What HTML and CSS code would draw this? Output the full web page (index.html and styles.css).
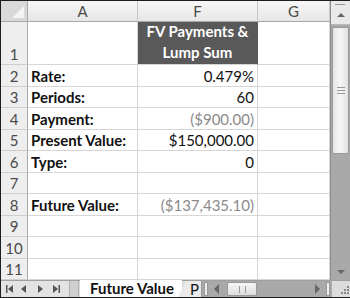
FILE: index.html
```html
<!DOCTYPE html>
<html lang="en">
<head>
    <meta charset="UTF-8">
    <title>Future Value</title>
    <link rel="stylesheet" href="styles.css">
</head>
<body>
    <div class="frame">
        <div class="main">
            <div class="sheet">
                <div class="corner"></div>
                <div class="ch">A</div>
                <div class="ch">F</div>
                <div class="ch">G</div>

                <div class="rh">1</div>
                <div class="cell"></div>
                <div class="cell title">FV Payments &amp;<br>Lump Sum</div>
                <div class="cell"></div>

                <div class="rh">2</div>
                <div class="cell label">Rate:</div>
                <div class="cell num">0.479%</div>
                <div class="cell"></div>

                <div class="rh">3</div>
                <div class="cell label">Periods:</div>
                <div class="cell num">60</div>
                <div class="cell"></div>

                <div class="rh">4</div>
                <div class="cell label">Payment:</div>
                <div class="cell num neg">($900.00)</div>
                <div class="cell"></div>

                <div class="rh">5</div>
                <div class="cell label">Present Value:</div>
                <div class="cell num">$150,000.00</div>
                <div class="cell"></div>

                <div class="rh">6</div>
                <div class="cell label">Type:</div>
                <div class="cell num">0</div>
                <div class="cell"></div>

                <div class="rh">7</div>
                <div class="cell"></div>
                <div class="cell"></div>
                <div class="cell"></div>

                <div class="rh">8</div>
                <div class="cell label">Future Value:</div>
                <div class="cell num neg">($137,435.10)</div>
                <div class="cell"></div>

                <div class="rh">9</div>
                <div class="cell"></div>
                <div class="cell"></div>
                <div class="cell"></div>

                <div class="rh">10</div>
                <div class="cell"></div>
                <div class="cell"></div>
                <div class="cell"></div>

                <div class="rh">11</div>
                <div class="cell"></div>
                <div class="cell"></div>
                <div class="cell"></div>
            </div>
            <div class="vscroll">
                <div class="vbtn up"><span class="tri-up"></span></div>
                <div class="vthumb"><span class="grip"></span></div>
                <div class="vtrack"></div>
                <div class="vbtn down"><span class="tri-down"></span></div>
            </div>
        </div>
        <div class="tabbar">
            <div class="nav">
                <svg width="66" height="12" viewBox="0 0 66 12">
                    <rect x="5" y="2" width="1.5" height="8" fill="#555"/>
                    <path d="M12 2 L7 6 L12 10 Z" fill="#555"/>
                    <path d="M25 2 L20 6 L25 10 Z" fill="#555"/>
                    <path d="M37 2 L42 6 L37 10 Z" fill="#555"/>
                    <path d="M52 2 L57 6 L52 10 Z" fill="#555"/>
                    <rect x="57.5" y="2" width="1.5" height="8" fill="#555"/>
                </svg>
            </div>
            <div class="splitter"></div>
            <div class="tab active">Future Value</div>
            <div class="tab next">P</div>
            <div class="hscroll">
                <span class="hmark"></span>
                <span class="tri-left"></span>
                <div class="hthumb"><span class="hgrip"></span></div>
                <div class="htrack"></div>
                <span class="tri-right"></span>
                <span class="hmark"></span>
            </div>
            <div class="resize">
                <svg width="14" height="14" viewBox="0 0 14 14">
                    <rect x="11" y="3" width="2" height="2" fill="#888"/>
                    <rect x="8" y="6" width="2" height="2" fill="#888"/>
                    <rect x="11" y="6" width="2" height="2" fill="#888"/>
                    <rect x="5" y="9" width="2" height="2" fill="#888"/>
                    <rect x="8" y="9" width="2" height="2" fill="#888"/>
                    <rect x="11" y="9" width="2" height="2" fill="#888"/>
                </svg>
            </div>
        </div>
    </div>
</body>
</html>
```
FILE: styles.css
```css
body {
    margin: 0;
    font-family: Lato, "Open Sans", Arial, sans-serif;
    background: #fff;
}
.frame {
    width: 350px;
    height: 298px;
    box-sizing: border-box;
    border-top: 1px solid #1e1e1e;
    border-left: 1px solid #1e1e1e;
    border-bottom: 1px solid #1e1e1e;
    display: flex;
    flex-direction: column;
    overflow: hidden;
}
.main {
    display: flex;
    height: 279px;
}
.sheet {
    display: grid;
    grid-template-columns: 27px 110px 120px 72px;
    grid-template-rows: 21px 43px repeat(10, 21.5px);
    width: 329px;
}
.corner {
    background: #d9d9d9;
    border-right: 1px solid #a8a8a8;
    border-bottom: 1px solid #a8a8a8;
    box-sizing: border-box;
    position: relative;
}
.corner::after {
    content: "";
    position: absolute;
    right: 3px;
    bottom: 3px;
    border-left: 12px solid transparent;
    border-bottom: 12px solid #f4f4f4;
}
.ch {
    background: linear-gradient(#f7f7f7, #e6e6e6);
    border-right: 1px solid #c8c8c8;
    border-bottom: 1px solid #a8a8a8;
    box-sizing: border-box;
    color: #4a4a4a;
    font-size: 15px;
    display: flex;
    align-items: center;
    justify-content: center;
}
.rh {
    background: #eeeeee;
    border-right: 1px solid #a8a8a8;
    border-bottom: 1px solid #cfcfcf;
    box-sizing: border-box;
    color: #4a4a4a;
    font-size: 15px;
    display: flex;
    align-items: flex-end;
    justify-content: center;
    padding-bottom: 1px;
    line-height: 18px;
}
.cell {
    border-right: 1px solid #d6d6d6;
    border-bottom: 1px solid #d6d6d6;
    box-sizing: border-box;
    font-size: 15px;
    line-height: 18px;
    display: flex;
    align-items: flex-end;
    padding: 0 3px 1px 3px;
    color: #111;
}
.label {
    font-weight: bold;
}
.num {
    justify-content: flex-end;
}
.neg {
    color: #8a8a8a;
}
.title {
    background: #595959;
    color: #fff;
    font-weight: bold;
    text-align: center;
    justify-content: center;
    line-height: 21px;
    padding-bottom: 1px;
    border-right-color: #595959;
}
.vscroll {
    width: 20px;
    background: #a9a9a9;
    border-left: 1px solid #8c8c8c;
    box-sizing: border-box;
    display: flex;
    flex-direction: column;
}
.vbtn {
    background: #e9e9e9;
    display: flex;
    justify-content: center;
    align-items: center;
}
.vbtn.up {
    height: 24px;
    border-bottom: 1px solid #bbb;
    box-sizing: border-box;
    position: relative;
}
.vbtn.up::before {
    content: "";
    position: absolute;
    top: 3px;
    left: 4px;
    width: 10px;
    height: 1px;
    background: #999;
}
.vbtn.down {
    height: 16px;
    background: #a9a9a9;
}
.tri-up {
    border-left: 4px solid transparent;
    border-right: 4px solid transparent;
    border-bottom: 4px solid #666;
    margin-top: 4px;
}
.tri-down {
    border-left: 4px solid transparent;
    border-right: 4px solid transparent;
    border-top: 4px solid #666;
}
.vthumb {
    height: 125px;
    margin: 2px 1px 0 1px;
    background: linear-gradient(90deg, #e6e6e6, #f6f6f6 50%, #e2e2e2);
    border: 1px solid #9a9a9a;
    border-radius: 2px;
    display: flex;
    align-items: center;
    justify-content: center;
}
.grip {
    width: 8px;
    height: 5px;
    border-top: 1px solid #999;
    border-bottom: 1px solid #999;
    position: relative;
}
.grip::after {
    content: "";
    position: absolute;
    left: 0;
    right: 0;
    top: 2px;
    height: 1px;
    background: #999;
}
.vtrack {
    flex: 1;
}
.tabbar {
    height: 18px;
    background: #dcdcdc;
    border-top: 1px solid #a0a0a0;
    box-sizing: border-box;
    display: flex;
    align-items: stretch;
}
.nav {
    width: 68px;
    display: flex;
    align-items: center;
    border-right: 1px solid #b0b0b0;
    background: #e3e3e3;
}
.splitter {
    width: 8px;
    background: #d0d0d0;
    border-right: 1px solid #b0b0b0;
}
.tab {
    font-size: 15px;
    font-weight: bold;
    line-height: 16px;
    color: #111;
}
.tab.active {
    background: #fff;
    padding: 0 8px 0 10px;
    margin-left: 1px;
    margin-top: -1px;
    position: relative;
    clip-path: polygon(0 0, 100% 0, 100% 100%, 0 100%);
}
.tab.next {
    background: #eaeaea;
    padding: 0 2px 0 12px;
    clip-path: polygon(8px 0, 100% 0, 100% 100%, 0 100%);
    margin-left: -4px;
    border-right: 1px solid #999;
    font-weight: normal;
}
.hscroll {
    flex: 1;
    display: flex;
    align-items: center;
    background: #a9a9a9;
    padding: 0 2px;
}
.hmark {
    width: 2px;
    height: 12px;
    background: #f0f0f0;
    border: 1px solid #999;
}
.tri-left {
    border-top: 5px solid transparent;
    border-bottom: 5px solid transparent;
    border-right: 5px solid #666;
    margin: 0 8px 0 6px;
}
.tri-right {
    border-top: 5px solid transparent;
    border-bottom: 5px solid transparent;
    border-left: 5px solid #666;
    margin: 0 6px 0 8px;
}
.hthumb {
    width: 30px;
    height: 14px;
    background: linear-gradient(#f6f6f6, #dedede);
    border: 1px solid #999;
    box-sizing: border-box;
    border-radius: 2px;
    display: flex;
    align-items: center;
    justify-content: center;
}
.hgrip {
    width: 5px;
    height: 7px;
    border-left: 1px solid #999;
    border-right: 1px solid #999;
}
.htrack {
    flex: 1;
}
.resize {
    width: 18px;
    background: #dcdcdc;
    display: flex;
    align-items: flex-end;
    justify-content: flex-end;
}
```
